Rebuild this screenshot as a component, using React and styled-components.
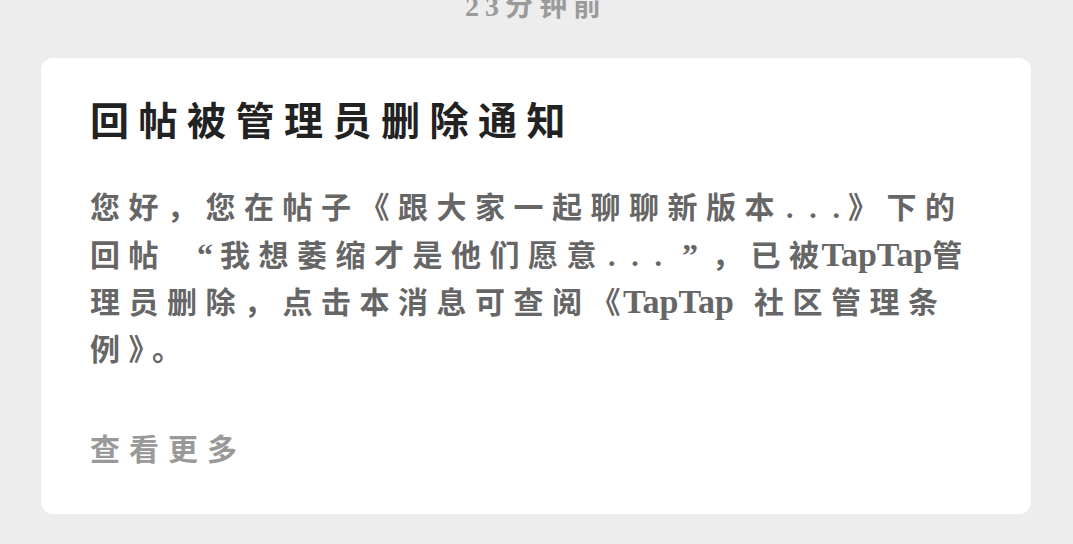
import React from "react";
import styled, { createGlobalStyle } from "styled-components";

const Global = createGlobalStyle`
  html, body { margin: 0; padding: 0; background: #ededed; }
  body { font-family: "Noto Sans CJK SC", "Liberation Serif", serif; }
`;

const Page = styled.div`
  display: flex;
  flex-direction: column;
  align-items: stretch;
  padding: 0 42px 30px 41px;
`;

const Time = styled.div`
  margin-top: -13px;
  height: 71px;
  text-align: center;
  font-family: "Liberation Serif", "Noto Sans CJK SC", serif;
  font-size: 28px;
  font-weight: 700;
  letter-spacing: 6px;
  color: #9a9a9a;
  line-height: 40px;
`;

const Card = styled.div`
  background: #fff;
  border-radius: 12px;
  padding: 33px 49px 47px 49px;
  display: flex;
  flex-direction: column;
`;

const Title = styled.h1`
  margin: 0;
  font-size: 39px;
  font-weight: 700;
  letter-spacing: 9.5px;
  line-height: 54px;
  color: #222;
`;

const Body = styled.p`
  margin: 38px 0 0 0;
  font-size: 30px;
  font-weight: 700;
  letter-spacing: 8.5px;
  line-height: 45.5px;
  color: #666;
`;

const Latin = styled.span`
  font-family: "Liberation Serif", serif;
  font-size: 34px;
  letter-spacing: 0;
  margin-left: -6px;
  margin-right: ${(p) => (p.$gap ? "20px" : "0")};
`;

const Dots = styled.span`
  font-family: "Liberation Serif", serif;
  letter-spacing: 15.8px;
  padding-left: 3px;
  margin-right: -8px;
`;

const Quote = styled.span`
  display: inline-block;
  box-sizing: border-box;
  width: ${(p) => (p.$open ? "53px" : "42px")};
  padding: ${(p) => (p.$open ? "0 7px 0 0" : "0 0 0 12px")};
  text-align: ${(p) => (p.$open ? "right" : "left")};
  font-family: "Liberation Serif", serif;
  font-size: 32px;
  letter-spacing: 0;
`;

const More = styled.div`
  margin-top: 57px;
  font-size: 30px;
  font-weight: 700;
  letter-spacing: 9px;
  line-height: 40px;
  color: #999;
`;

export default function App() {
  return (
    <>
      <Global />
      <Page>
        <Time>23分钟前</Time>
        <Card>
          <Title>回帖被管理员删除通知</Title>
          <Body>
            您好，您在帖子《跟大家一起聊聊新版本<Dots>...</Dots>》下的回帖<Quote $open>“</Quote>我想萎缩才是他们愿意<Dots>...</Dots><Quote>”</Quote>，已被<Latin>TapTap</Latin>管理员删除，点击本消息可查阅《<Latin $gap>TapTap</Latin>社区管理条例》。
          </Body>
          <More>查看更多</More>
        </Card>
      </Page>
    </>
  );
}
